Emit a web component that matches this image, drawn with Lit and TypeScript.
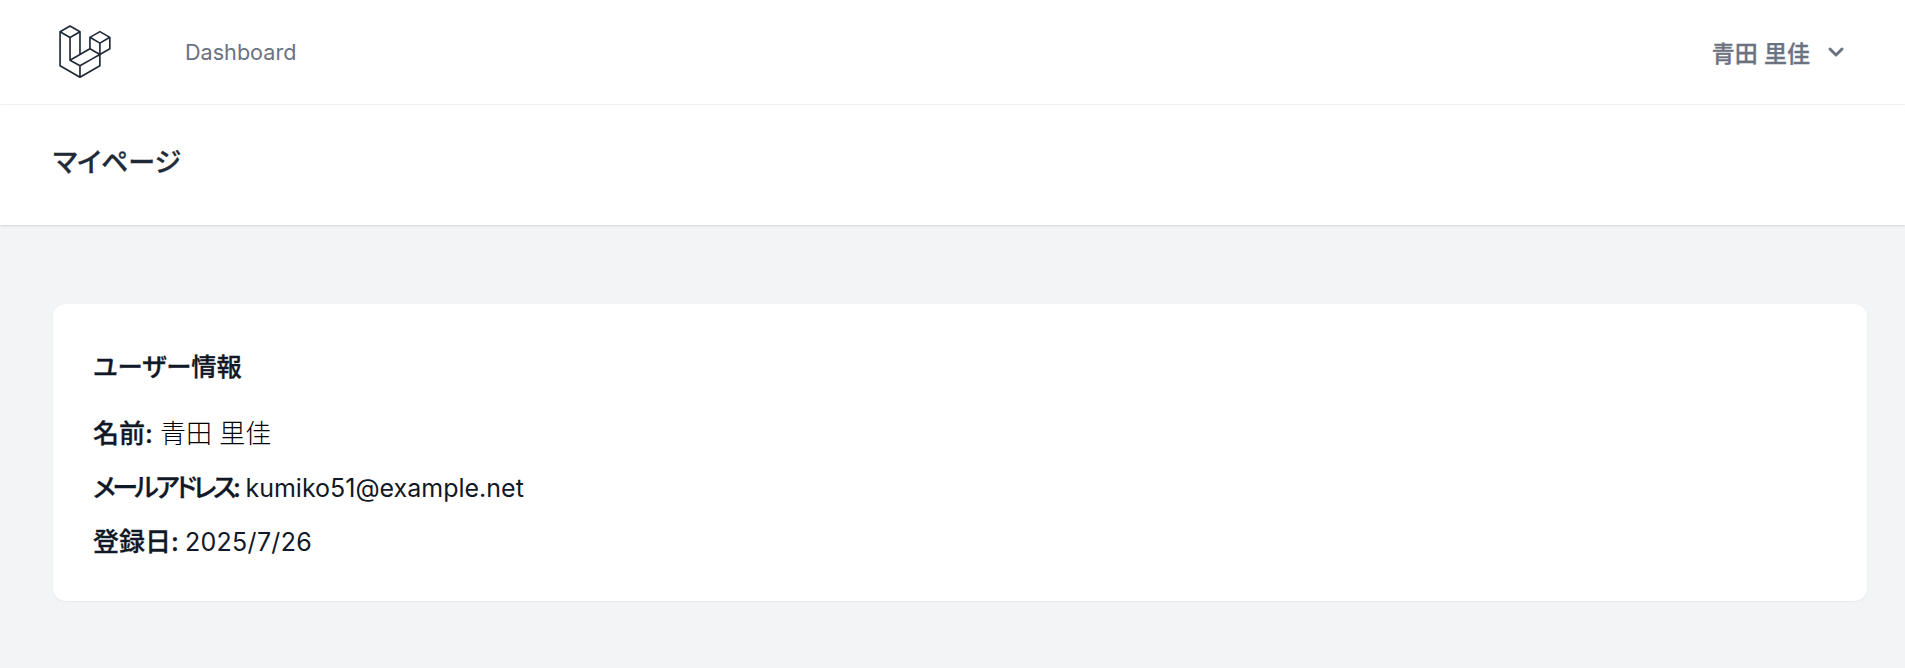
import { LitElement, css, html } from "lit";
import { customElement, property } from "lit/decorators.js";

const LOGO_PATH =
  "M61.8548 14.6253C61.8778 14.7102 61.8895 14.7978 61.8897 14.8858V28.5615C61.8898 28.737 61.8434 28.9095 61.7554 29.0614C61.6675 29.2132 61.5409 29.3392 61.3887 29.4265L49.9104 36.0351V49.1337C49.9104 49.4902 49.7209 49.8192 49.4118 49.9987L25.4519 63.7916C25.3971 63.8227 25.3372 63.8427 25.2774 63.8639C25.255 63.8714 25.2338 63.8851 25.2101 63.8913C25.0426 63.9354 24.8666 63.9354 24.6991 63.8913C24.6716 63.8838 24.6467 63.8689 24.6205 63.8589C24.5657 63.8389 24.5084 63.8215 24.456 63.7916L0.501061 49.9987C0.348882 49.9113 0.222437 49.7853 0.134469 49.6334C0.0465019 49.4816 0.000120578 49.3092 0 49.1337L0 8.10652C0 8.01678 0.0124642 7.92953 0.0348998 7.84477C0.0423783 7.8161 0.0598282 7.78993 0.0697995 7.76126C0.0884958 7.70891 0.105946 7.65531 0.133367 7.6067C0.152063 7.5743 0.179485 7.54812 0.20192 7.51821C0.230588 7.47832 0.256763 7.43719 0.290416 7.40229C0.319084 7.37362 0.356476 7.35243 0.388883 7.32751C0.425029 7.29759 0.457436 7.26518 0.498568 7.2415L12.4779 0.345059C12.6296 0.257786 12.8015 0.211853 12.9765 0.211853C13.1515 0.211853 13.3234 0.257786 13.475 0.345059L25.4531 7.2415H25.4556C25.4955 7.26643 25.5292 7.29759 25.5653 7.32626C25.5977 7.35119 25.6339 7.37362 25.6625 7.40104C25.6974 7.43719 25.7224 7.47832 25.7523 7.51821C25.7735 7.54812 25.8021 7.5743 25.8196 7.6067C25.8483 7.65656 25.8645 7.70891 25.8844 7.76126C25.8944 7.78993 25.9118 7.8161 25.9193 7.84602C25.9423 7.93096 25.954 8.01853 25.9542 8.10652V33.7317L35.9355 27.9844V14.8846C35.9355 14.7973 35.948 14.7088 35.9704 14.6253C35.9792 14.5954 35.9954 14.5692 36.0053 14.5405C36.0253 14.4882 36.0427 14.4346 36.0702 14.386C36.0888 14.3536 36.1163 14.3274 36.1375 14.2975C36.1674 14.2576 36.1923 14.2165 36.2272 14.1816C36.2559 14.1529 36.292 14.1317 36.3244 14.1068C36.3618 14.0769 36.3942 14.0445 36.4341 14.0208L48.4147 7.12434C48.5663 7.03694 48.7383 6.99094 48.9133 6.99094C49.0883 6.99094 49.2602 7.03694 49.4118 7.12434L61.3899 14.0208C61.4323 14.0457 61.4647 14.0769 61.5021 14.1055C61.5333 14.1305 61.5694 14.1529 61.5981 14.1803C61.633 14.2165 61.6579 14.2576 61.6878 14.2975C61.7103 14.3274 61.7377 14.3536 61.7551 14.386C61.7838 14.4346 61.8 14.4882 61.8199 14.5405C61.8312 14.5692 61.8474 14.5954 61.8548 14.6253ZM59.893 27.9844V16.6121L55.7013 19.0252L49.9104 22.3593V33.7317L59.8942 27.9844H59.893ZM47.9149 48.5566V37.1768L42.2187 40.4299L25.953 49.7133V61.2003L47.9149 48.5566ZM1.99677 9.83281V48.5566L23.9562 61.199V49.7145L12.4841 43.2219L12.4804 43.2194L12.4754 43.2169C12.4368 43.1945 12.4044 43.1621 12.3682 43.1347C12.3371 43.1097 12.3009 43.0898 12.2735 43.0624L12.271 43.0586C12.2386 43.0275 12.2162 42.9888 12.1887 42.9539C12.1638 42.9203 12.1339 42.8916 12.114 42.8567L12.1127 42.853C12.0903 42.8156 12.0766 42.7707 12.0604 42.7283C12.0442 42.6909 12.023 42.656 12.013 42.6161C12.0005 42.5688 11.998 42.5177 11.9931 42.4691C11.9881 42.4317 11.9781 42.3943 11.9781 42.3569V15.5801L6.18848 12.2446L1.99677 9.83281ZM12.9777 2.36177L2.99764 8.10652L12.9752 13.8513L22.9541 8.10527L12.9752 2.36177H12.9777ZM18.1678 38.2138L23.9574 34.8809V9.83281L19.7657 12.2459L13.9749 15.5801V40.6281L18.1678 38.2138ZM48.9133 9.14105L38.9344 14.8858L48.9133 20.6305L58.8909 14.8846L48.9133 9.14105ZM47.9149 22.3593L42.124 19.0252L37.9323 16.6121V27.9844L43.7219 31.3174L47.9149 33.7317V22.3593ZM24.9533 47.987L39.59 39.631L46.9065 35.4555L36.9352 29.7145L25.4544 36.3242L14.9907 42.3482L24.9533 47.987Z";

@customElement("app-root")
export class AppRoot extends LitElement {
  @property() userName = "青田 里佳";
  @property() email = "kumiko51@example.net";
  @property() registered = "2025/7/26";

  override render() {
    return html`
      <nav class="nav">
        <div class="nav__left">
          <svg class="logo" viewBox="0 0 62 65" fill="currentColor" xmlns="http://www.w3.org/2000/svg">
            <path d=${LOGO_PATH}></path>
          </svg>
          <a class="nav__link">Dashboard</a>
        </div>
        <button class="user">
          <span>${this.userName}</span>
          <svg class="chevron" viewBox="0 0 20 20" fill="currentColor" xmlns="http://www.w3.org/2000/svg">
            <path
              fill-rule="evenodd"
              clip-rule="evenodd"
              d="M5.293 7.293a1 1 0 011.414 0L10 10.586l3.293-3.293a1 1 0 111.414 1.414l-4 4a1 1 0 01-1.414 0l-4-4a1 1 0 010-1.414z"
            ></path>
          </svg>
        </button>
      </nav>
      <header class="header">
        <h2>マイページ</h2>
      </header>
      <main class="main">
        <section class="card">
          <h3>ユーザー情報</h3>
          <p><strong>名前:</strong> <span class="kanji">${this.userName}</span></p>
          <p><strong class="kana">メールアドレス:</strong> ${this.email}</p>
          <p><strong>登録日:</strong> <span class="date">${this.registered}</span></p>
        </section>
      </main>
    `;
  }

  static override styles = css`
    :host {
      display: block;
      min-height: 668px;
      background: #f3f4f6;
      font-family: "Inter", "Noto Sans CJK JP", sans-serif;
      color: #111827;
    }
    .nav {
      display: flex;
      align-items: center;
      justify-content: space-between;
      box-sizing: border-box;
      height: 105px;
      padding: 0 54px 0 59px;
      background: #fff;
      border-bottom: 1px solid #f3f4f6;
    }
    .nav__left {
      display: flex;
      align-items: center;
      gap: 74px;
    }
    .logo {
      display: block;
      height: 54px;
      width: 52px;
      color: #1f2937;
    }
    .nav__link {
      font-size: 21.6px;
      color: #6b7280;
    }
    .user {
      display: flex;
      align-items: center;
      gap: 11px;
      padding: 0;
      border: 0;
      background: none;
      font: inherit;
      font-size: 23px;
      font-weight: 500;
      -webkit-text-stroke: 0.3px currentColor;
      color: #6b7280;
    }
    .chevron {
      display: block;
      width: 30px;
      height: 30px;
    }
    .header {
      display: flex;
      align-items: center;
      box-sizing: border-box;
      height: 120px;
      padding: 0 53px 10px;
      background: #fff;
      box-shadow: 0 1px 3px 0 rgb(0 0 0 / 0.1), 0 1px 2px -1px rgb(0 0 0 / 0.1);
    }
    h2 {
      margin: 0;
      font-size: 27px;
      font-weight: 500;
      -webkit-text-stroke: 0.3px currentColor;
      font-feature-settings: "palt";
      color: #1f2937;
    }
    .main {
      padding: 79px 38px 0 53px;
    }
    .card {
      box-sizing: border-box;
      height: 297px;
      padding: 47px 40px 0;
      background: #fff;
      border-radius: 13px;
      box-shadow: 0 1px 2px 0 rgb(0 0 0 / 0.05);
    }
    h3 {
      margin: 0 0 34px;
      font-size: 25.3px;
      line-height: 32px;
      font-weight: 500;
      -webkit-text-stroke: 0.3px currentColor;
      font-feature-settings: "palt";
      color: #111827;
    }
    p {
      margin: 0 0 20px;
      font-size: 25px;
      line-height: 34px;
    }
    p:last-child {
      margin-bottom: 0;
    }
    strong {
      font-size: 26px;
      font-weight: 500;
      -webkit-text-stroke: 0.3px currentColor;
    }
    .kana {
      font-feature-settings: "palt";
      letter-spacing: -3.4px;
      margin-right: 1px;
    }
    .kanji {
      font-size: 26px;
      font-weight: 300;
      color: #000;
    }
    .date {
      letter-spacing: 0.3px;
      margin-left: -1px;
    }
  `;
}

declare global {
  interface HTMLElementTagNameMap {
    "app-root": AppRoot;
  }
}
